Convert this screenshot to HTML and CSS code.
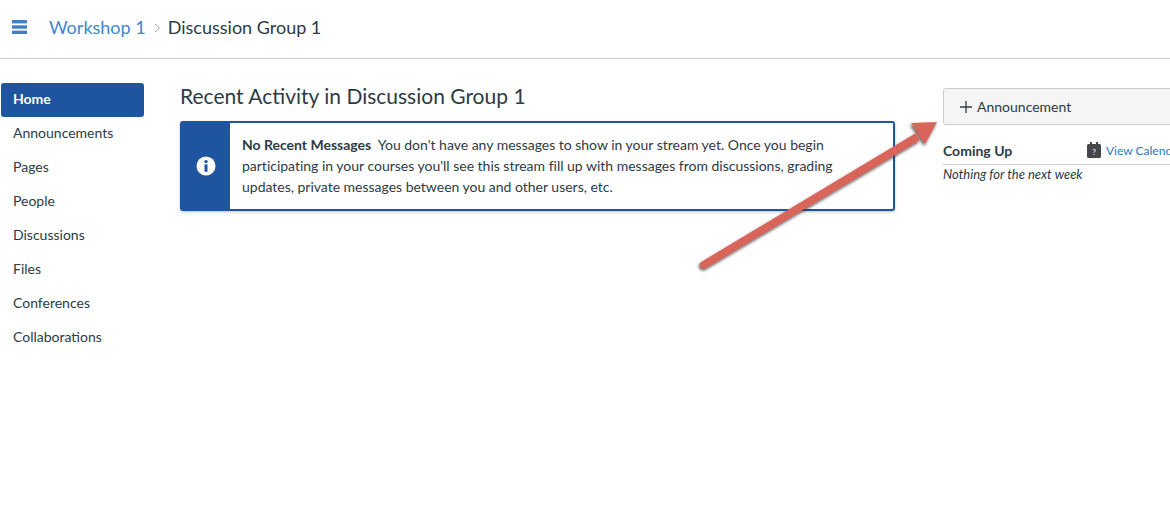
FILE: index.html
```html
<!DOCTYPE html>
<html lang="en">
<head>
    <meta charset="UTF-8">
    <title>Discussion Group 1</title>
    <link rel="stylesheet" href="styles.css">
</head>
<body>
    <div class="header">
        <svg class="menu-icon" width="15" height="14" viewBox="0 0 15 14">
            <rect x="0" y="0" width="15" height="3.4"/>
            <rect x="0" y="5.3" width="15" height="3.4"/>
            <rect x="0" y="10.6" width="15" height="3.4"/>
        </svg>
        <a class="crumb" href="#">Workshop 1</a>
        <svg class="crumb-sep" width="7" height="10" viewBox="0 0 7 10">
            <path d="M1 1l4.5 4-4.5 4" fill="none" stroke="#9a9fa3" stroke-width="1"/>
        </svg>
        <span class="crumb-current">Discussion Group 1</span>
    </div>

    <div class="page">
        <div class="nav">
            <a class="active" href="#">Home</a>
            <a href="#">Announcements</a>
            <a href="#">Pages</a>
            <a href="#">People</a>
            <a href="#">Discussions</a>
            <a href="#">Files</a>
            <a href="#">Conferences</a>
            <a href="#">Collaborations</a>
        </div>

        <div class="content">
            <h1>Recent Activity in Discussion Group 1</h1>
            <div class="alert">
                <div class="alert-icon">
                    <svg width="20" height="20" viewBox="0 0 20 20">
                        <circle cx="10" cy="10" r="9.5" fill="#fff"/>
                        <circle cx="10" cy="5.6" r="1.7" fill="#1f559f"/>
                        <rect x="8.5" y="8.4" width="3" height="7.4" fill="#1f559f"/>
                    </svg>
                </div>
                <p><b>No Recent Messages</b>&nbsp; You don't have any messages to show in your stream yet. Once you begin participating in your courses you'll see this stream fill up with messages from discussions, grading updates, private messages between you and other users, etc.</p>
            </div>
        </div>

        <div class="aside">
            <div class="btn">
                <svg class="plus" width="12" height="12" viewBox="0 0 12 12">
                    <path d="M6 0v12M0 6h12" fill="none" stroke="#2d3b45" stroke-width="1.3"/>
                </svg>
                Announcement
            </div>
            <div class="coming">
                <h2>Coming Up</h2>
                <svg class="cal-icon" width="14" height="16" viewBox="0 0 14 16">
                    <path d="M1.500 2H3V0h2v2h4V0h2v2h1.500A1.500 1.500 0 0 1 14 3.500v11a1.500 1.500 0 0 1-1.500 1.500h-11A1.500 1.500 0 0 1 0 14.500v-11A1.500 1.500 0 0 1 1.500 2z" fill="#45474a"/>
                    <text class="cal-mark" x="7" y="12.500" text-anchor="middle">?</text>
                </svg>
                <a href="#">View Calendar</a>
            </div>
            <div class="nothing">Nothing for the next week</div>
        </div>
    </div>

    <!-- annotation drawn over the screenshot -->
    <svg class="arrow" width="1170" height="508" viewBox="0 0 1170 508">
        <defs>
            <filter id="arrow-shadow" x="-10%" y="-10%" width="120%" height="120%">
                <feDropShadow dx="-1" dy="2" stdDeviation="1.500" flood-color="#222" flood-opacity="0.75"/>
            </filter>
        </defs>
        <g filter="url(#arrow-shadow)" fill="#d9655a">
            <path d="M702 261.500L916 133l4 7L706 268q-3 1.500-5.500-1.500t1.500-5z"/>
            <path d="M911 123l26-1-12 22z"/>
        </g>
    </svg>
</body>
</html>
```

FILE: styles.css
```css
html, body {
    margin: 0;
    padding: 0;
}
body {
    font-family: Lato, "Open Sans", sans-serif;
    background: #fff;
    color: #2d3b45;
    height: 508px;
    overflow: hidden;
    position: relative;
}
.header {
    display: flex;
    align-items: center;
    height: 59px;
    box-sizing: border-box;
    border-bottom: 1px solid #c7cdd1;
    padding: 0 0 5px 12px;
}
.menu-icon {
    fill: #3f80c9;
    margin-right: 22px;
}
.crumb {
    color: #3f86d4;
    font-size: 18px;
    text-decoration: none;
}
.crumb-sep {
    margin: 3px 7px 0 8px;
}
.crumb-current {
    font-size: 18px;
}
.page {
    display: flex;
    align-items: flex-start;
}
.nav {
    width: 143px;
    margin: 24px 0 0 1px;
    flex-shrink: 0;
    display: flex;
    flex-direction: column;
}
.nav a {
    height: 34px;
    line-height: 32px;
    padding-left: 12px;
    font-size: 14px;
    color: #2d3b45;
    text-decoration: none;
}
.nav a.active {
    background: #1f559f;
    color: #fff;
    font-weight: bold;
    border-radius: 3px;
}
.content {
    width: 715px;
    margin-left: 36px;
    margin-top: 23px;
    flex-shrink: 0;
}
h1 {
    font-size: 21px;
    font-weight: normal;
    line-height: 28px;
    margin: 0 0 11px;
}
.alert {
    display: flex;
    border: 2px solid #1f559f;
    border-radius: 3px;
    height: 90px;
    box-sizing: border-box;
    box-shadow: 0 1px 3px rgba(0, 0, 0, 0.25);
}
.alert-icon {
    width: 48px;
    background: #1f559f;
    display: flex;
    align-items: center;
    justify-content: center;
    flex-shrink: 0;
}
.alert p {
    margin: 0;
    padding: 11px 40px 0 12px;
    font-size: 14px;
    line-height: 21px;
    letter-spacing: -0.01px;
}
.aside {
    margin-left: 48px;
    margin-top: 29px;
    width: 227px;
    flex-shrink: 0;
    overflow: hidden;
}
.btn {
    display: flex;
    align-items: center;
    width: 300px;
    height: 37px;
    box-sizing: border-box;
    background: #f5f5f5;
    border: 1px solid #c7cdd1;
    border-radius: 3px;
    padding: 0 0 0 16px;
    font-size: 14px;
}
.plus {
    margin-right: 5px;
}
.coming {
    display: flex;
    align-items: center;
    width: 300px;
    height: 28px;
    margin-top: 11px;
    border-bottom: 1px solid #c7cdd1;
}
h2 {
    font-size: 14px;
    font-weight: bold;
    margin: 0;
    width: 144px;
    flex-shrink: 0;
}
.cal-icon {
    margin-right: 5px;
}
.cal-mark {
    font-size: 8px;
    font-weight: bold;
    fill: #ddd;
}
.coming a {
    font-size: 12px;
    color: #2a7abf;
    text-decoration: none;
    white-space: nowrap;
}
.nothing {
    font-size: 13px;
    font-style: italic;
    margin-top: 1px;
}
.arrow {
    position: absolute;
    left: 0;
    top: 0;
}
```
